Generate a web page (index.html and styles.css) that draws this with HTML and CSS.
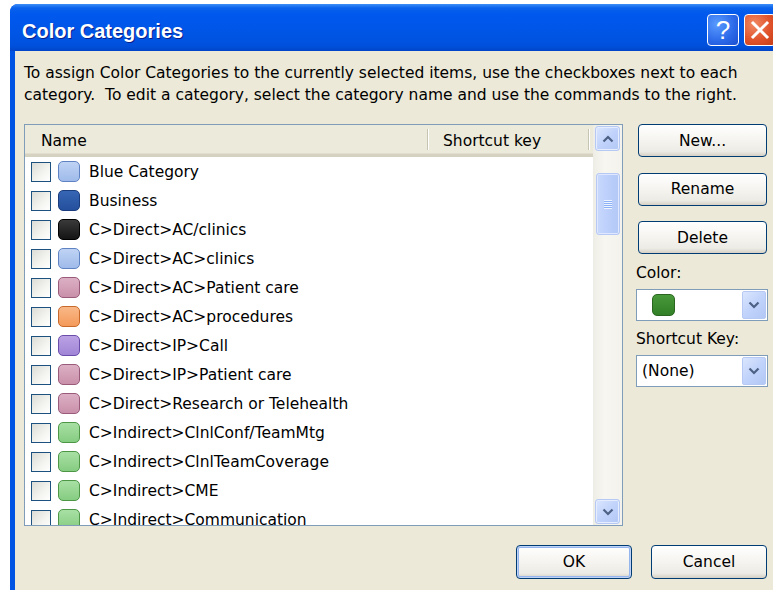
FILE: index.html
```html
<!DOCTYPE html>
<html lang="en">
<head>
<meta charset="utf-8">
<title>Color Categories</title>
<link rel="stylesheet" href="styles.css">
</head>
<body>
<div class="window">
  <div class="titlebar">
    <span class="title">Color Categories</span>
    <div class="caption-buttons">
      <span class="cap-btn help">?</span>
      <span class="cap-btn close">
        <svg width="20" height="20" viewBox="0 0 20 20"><path d="M3 3 L17 17 M17 3 L3 17" stroke="#fff" stroke-width="3" stroke-linecap="square"/></svg>
      </span>
    </div>
  </div>
  <div class="client">
    <p class="intro">To assign Color Categories to the currently selected items, use the checkboxes next to each<br>category.&nbsp; To edit a category, select the category name and use the commands to the right.</p>
    <div class="main">
      <div class="listbox">
        <div class="list-body">
          <div class="list-header">
            <span class="col col-name">Name</span>
            <span class="col col-key">Shortcut key</span>
            <span class="col col-rest"></span>
          </div>
          <div class="rows">
            <div class="row"><span class="check"></span><span class="swatch sw-lightblue"></span><span class="label">Blue Category</span></div>
            <div class="row"><span class="check"></span><span class="swatch sw-darkblue"></span><span class="label">Business</span></div>
            <div class="row"><span class="check"></span><span class="swatch sw-black"></span><span class="label">C&gt;Direct&gt;AC/clinics</span></div>
            <div class="row"><span class="check"></span><span class="swatch sw-lightblue"></span><span class="label">C&gt;Direct&gt;AC&gt;clinics</span></div>
            <div class="row"><span class="check"></span><span class="swatch sw-mauve"></span><span class="label">C&gt;Direct&gt;AC&gt;Patient care</span></div>
            <div class="row"><span class="check"></span><span class="swatch sw-orange"></span><span class="label">C&gt;Direct&gt;AC&gt;procedures</span></div>
            <div class="row"><span class="check"></span><span class="swatch sw-purple"></span><span class="label">C&gt;Direct&gt;IP&gt;Call</span></div>
            <div class="row"><span class="check"></span><span class="swatch sw-mauve"></span><span class="label">C&gt;Direct&gt;IP&gt;Patient care</span></div>
            <div class="row"><span class="check"></span><span class="swatch sw-mauve"></span><span class="label">C&gt;Direct&gt;Research or Telehealth</span></div>
            <div class="row"><span class="check"></span><span class="swatch sw-green"></span><span class="label">C&gt;Indirect&gt;ClnlConf/TeamMtg</span></div>
            <div class="row"><span class="check"></span><span class="swatch sw-green"></span><span class="label">C&gt;Indirect&gt;ClnlTeamCoverage</span></div>
            <div class="row"><span class="check"></span><span class="swatch sw-green"></span><span class="label">C&gt;Indirect&gt;CME</span></div>
            <div class="row"><span class="check"></span><span class="swatch sw-green"></span><span class="label">C&gt;Indirect&gt;Communication</span></div>
          </div>
        </div>
        <div class="vscroll">
          <span class="sb-btn">
            <svg width="12" height="8" viewBox="0 0 12 8"><path d="M1.5 6.5 L6 2 L10.5 6.5" fill="none" stroke="#4d6185" stroke-width="2.2"/></svg>
          </span>
          <div class="sb-track">
            <span class="sb-thumb"><span class="grip"></span></span>
          </div>
          <span class="sb-btn">
            <svg width="12" height="8" viewBox="0 0 12 8"><path d="M1.5 1.5 L6 6 L10.5 1.5" fill="none" stroke="#4d6185" stroke-width="2.2"/></svg>
          </span>
        </div>
      </div>
      <div class="side">
        <button class="btn side-btn">New...</button>
        <button class="btn side-btn">Rename</button>
        <button class="btn side-btn">Delete</button>
        <div class="field-label">Color:</div>
        <div class="combo">
          <span class="combo-value"><span class="swatch sw-picked"></span></span>
          <span class="combo-btn">
            <svg width="12" height="8" viewBox="0 0 12 8"><path d="M1.5 1.5 L6 6 L10.5 1.5" fill="none" stroke="#4d6185" stroke-width="2.2"/></svg>
          </span>
        </div>
        <div class="field-label">Shortcut Key:</div>
        <div class="combo">
          <span class="combo-value combo-text">(None)</span>
          <span class="combo-btn">
            <svg width="12" height="8" viewBox="0 0 12 8"><path d="M1.5 1.5 L6 6 L10.5 1.5" fill="none" stroke="#4d6185" stroke-width="2.2"/></svg>
          </span>
        </div>
      </div>
    </div>
    <div class="footer">
      <button class="btn footer-btn default">OK</button>
      <button class="btn footer-btn">Cancel</button>
    </div>
  </div>
</div>
</body>
</html>
```
FILE: styles.css
```css
html, body {
  margin: 0;
  height: 100%;
  overflow: hidden;
  background: #fff;
}

body {
  font-family: "DejaVu Sans", sans-serif;
  font-size: 15.5px;
  color: #000;
}

/* window frame */
.window {
  margin: 4px 0 0 10px;
  width: 772px;
  height: 600px;
  display: flex;
  flex-direction: column;
  border-radius: 8px 8px 0 0;
  background: #0054e3;
  overflow: hidden;
}

.titlebar {
  height: 47px;
  flex: none;
  display: flex;
  align-items: center;
  padding: 0 6px 0 12px;
  background: linear-gradient(#3d8ff8 0px, #0a62ec 4px, #0058ee 10px, #0055e5 30px, #0050dc 42px, #0046c8 47px);
}

.title {
  font-family: "Liberation Sans", sans-serif;
  font-weight: bold;
  font-size: 20px;
  color: #fff;
  text-shadow: 1px 1px 0 #0a1f8c;
  padding-top: 7px;
}

.caption-buttons {
  margin-left: auto;
  display: flex;
  gap: 5px;
  padding-top: 4px;
}

.cap-btn {
  width: 30px;
  height: 30px;
  border: 1px solid #fff;
  border-radius: 4px;
  display: flex;
  align-items: center;
  justify-content: center;
  color: #fff;
}

.help {
  background: radial-gradient(circle at 30% 30%, #5a9bff, #2a68e8 60%, #1c50d0);
  font-family: "Liberation Sans", sans-serif;
  font-size: 26px;
  line-height: 1;
}

.close {
  background: radial-gradient(circle at 30% 30%, #f08a64, #e0522a 55%, #c43c16);
}

/* client area */
.client {
  flex: 1;
  margin-left: 5px;
  background: #ece9d8;
  padding: 11px 0 0 9px;
}

.intro {
  margin: 0;
  line-height: 22px;
  white-space: nowrap;
}

.main {
  margin-top: 18px;
  width: 744px;
  display: flex;
  gap: 13px;
}

/* list view */
.listbox {
  width: 597px;
  height: 400px;
  border: 1px solid #7f9db9;
  background: #fff;
  display: flex;
}

.list-body {
  flex: 1;
  min-width: 0;
  display: flex;
  flex-direction: column;
}

.list-header {
  height: 29px;
  flex: none;
  display: flex;
  align-items: center;
  background: #ebeadb;
  border-bottom: 3px solid #d6d2c2;
  box-shadow: inset 0 -1px 0 #e2decd;
}

.col {
  height: 100%;
  display: flex;
  align-items: center;
  box-sizing: border-box;
  border-right: 1px solid #c7c5b2;
}

.list-header .col {
  height: 21px;
  padding-top: 3px;
  box-shadow: 1px 0 0 #fff;
}

.col-name {
  width: 403px;
  padding-left: 16px;
}

.col-key {
  width: 161px;
  padding-left: 15px;
}

.col-rest {
  flex: 1;
  border-right: none;
  box-shadow: none !important;
}

.rows {
  flex: 1;
  overflow: hidden;
}

.row {
  height: 29px;
  display: flex;
  align-items: center;
  padding-left: 6px;
}

.check {
  width: 18px;
  height: 18px;
  flex: none;
  border: 1px solid #1c5180;
  background: linear-gradient(135deg, #dcdcd7, #f4f4f0 60%, #fff);
}

.swatch {
  width: 20px;
  height: 19px;
  flex: none;
  margin-left: 7px;
  border: 1px solid;
  border-radius: 5px;
}

.label {
  margin-left: 9px;
  white-space: nowrap;
}

.sw-lightblue { background: linear-gradient(#bfd3f4, #9fbbea); border-color: #5f83c2; }
.sw-darkblue  { background: linear-gradient(#3766b4, #244f9c); border-color: #1a3c7c; }
.sw-black     { background: linear-gradient(#3a3a3a, #141414); border-color: #000; }
.sw-mauve     { background: linear-gradient(#dcb0c4, #c990aa); border-color: #9a5a7a; }
.sw-orange    { background: linear-gradient(#f9b888, #f49a5a); border-color: #c8682a; }
.sw-purple    { background: linear-gradient(#bba2e4, #a084d6); border-color: #6a4caa; }
.sw-green     { background: linear-gradient(#a8e0a4, #86cc82); border-color: #4c9646; }
.sw-picked    { background: linear-gradient(#48993a, #327f27); border-color: #2a661f; margin-left: 15px; width: 21px; height: 20px; }

/* vertical scrollbar */
.vscroll {
  width: 29px;
  flex: none;
  display: flex;
  flex-direction: column;
  align-items: center;
  padding: 1px 0;
  background: linear-gradient(90deg, #eeede5, #f7f6f1 40%, #f3f2ec);
}

.sb-btn {
  width: 23px;
  height: 23px;
  flex: none;
  border: 1px solid #b5c9f4;
  border-radius: 3px;
  background: linear-gradient(135deg, #dbe6fe, #c1d3fb 50%, #b2c7f5);
  box-shadow: inset 0 0 0 1px #e6eefe;
  display: flex;
  align-items: center;
  justify-content: center;
}

.sb-track {
  flex: 1;
  width: 100%;
  display: flex;
  flex-direction: column;
  align-items: center;
  padding-top: 22px;
}

.sb-thumb {
  width: 22px;
  height: 60px;
  border: 1px solid #b5c9f4;
  border-radius: 3px;
  background: linear-gradient(90deg, #c9d8fc, #bccffb 50%, #b3c8f6);
  box-shadow: inset 0 0 0 1px #dfe8fe;
  display: flex;
  align-items: center;
  justify-content: center;
}

.grip {
  width: 8px;
  height: 9px;
  background: repeating-linear-gradient(#eef4fe 0 1px, #8cb0f8 1px 2px);
}

/* right column */
.side {
  width: 132px;
  display: flex;
  flex-direction: column;
}

.btn {
  font: inherit;
  color: #000;
  border: 1px solid #003c74;
  border-radius: 4px;
  background: linear-gradient(#fff 0%, #f6f5f1 45%, #ecebe5 85%, #d6d0c5 100%);
  padding: 0;
  cursor: default;
}

.side-btn {
  height: 33px;
  margin: 0 1px 15.5px 2px;
}

.side-btn:nth-of-type(3) {
  margin-bottom: 0;
}

.field-label {
  margin-top: 9px;
  line-height: 20px;
}

.combo {
  margin-top: 6px;
  height: 30px;
  border: 1px solid #7f9db9;
  background: #fff;
  display: flex;
  align-items: center;
}

.combo + .field-label {
  margin-top: 8px;
}

.combo-value {
  flex: 1;
  display: flex;
  align-items: center;
}

.combo-text {
  padding-left: 5px;
}

.combo-btn {
  width: 22px;
  height: 26px;
  margin-right: 1px;
  border: 1px solid #b5c9f4;
  border-radius: 2px;
  background: linear-gradient(135deg, #dbe6fe, #c1d3fb 50%, #b2c7f5);
  display: flex;
  align-items: center;
  justify-content: center;
}

/* dialog buttons */
.footer {
  width: 743px;
  margin-top: 19px;
  display: flex;
  justify-content: flex-end;
  gap: 19px;
}

.footer-btn {
  width: 116px;
  height: 34px;
}

.footer-btn.default {
  box-shadow: inset 0 0 0 1px #c0d3f7, inset 0 0 0 2px #94b5ee;
}
```
